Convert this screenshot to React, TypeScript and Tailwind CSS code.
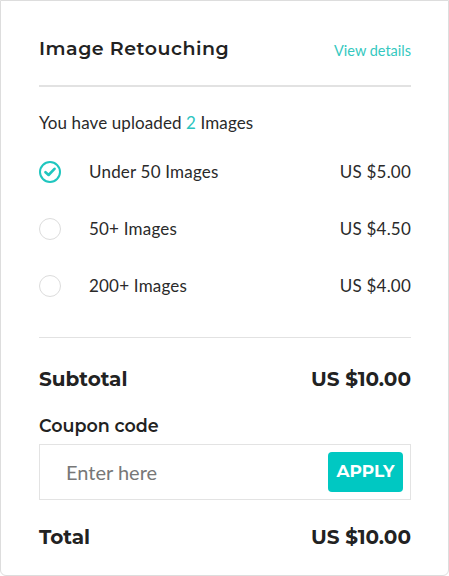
import React from 'react';

const tiers = [
  { label: 'Under 50 Images', price: 'US $5.00', checked: true },
  { label: '50+ Images', price: 'US $4.50', checked: false },
  { label: '200+ Images', price: 'US $4.00', checked: false },
];

function Radio({ checked }: { checked: boolean }) {
  if (!checked) {
    return <span className="w-[22px] h-[22px] rounded-full border border-[#dcdcdc] shrink-0" />;
  }
  return (
    <span className="w-[22px] h-[22px] rounded-full border-2 border-[#1fc6bf] shrink-0 flex items-center justify-center">
      <svg width="12" height="10" viewBox="0 0 12 10">
        <path d="M1.5 5.2 L4.6 8 L10.5 1.8" fill="none" stroke="#1fc6bf" strokeWidth="2.6" strokeLinecap="round" strokeLinejoin="round" />
      </svg>
    </span>
  );
}

export default function App() {
  const head = { fontFamily: 'Montserrat, Inter, "Liberation Sans", sans-serif' };
  const body = { fontFamily: 'Lato, "Noto Sans", sans-serif' };
  return (
    <div className="w-[449px] h-[576px] bg-white">
      <div className="h-[576px] border border-[#dddddd] rounded-b-[6px] pl-[38px] pr-[37px] pt-[35px] text-[#222222]" style={body}>
        <div className="flex items-center justify-between h-[26px]">
          <h2 className="text-[19px] font-semibold tracking-[0.5px]" style={head}>Image Retouching</h2>
          <a className="text-[14.5px] text-[#35c8c0] mt-[4px]">View details</a>
        </div>
        <div className="h-[2px] bg-[#e2e2e2] mt-[23px]" />
        <p className="text-[17px] tracking-[0.1px] mt-[23px] text-[#2a2a2a]">
          You have uploaded <span className="text-[#2cc5bf]">2</span> Images
        </p>
        <div className="mt-[8px]">
          {tiers.map((t) => (
            <div key={t.label} className="flex items-center h-[57px] text-[17px] tracking-[0.2px] text-[#2a2a2a]">
              <Radio checked={t.checked} />
              <span className="ml-[28px] flex-1">{t.label}</span>
              <span>{t.price}</span>
            </div>
          ))}
        </div>
        <div className="h-px bg-[#e2e2e2] mt-[22px]" />
        <div className="flex items-center justify-between mt-[26px] text-[20px] font-bold" style={head}>
          <span>Subtotal</span>
          <span>US $10.00</span>
        </div>
        <div className="mt-[19px] text-[17.5px] font-semibold" style={head}>Coupon code</div>
        <div className="mt-[5px] h-[56px] border border-[#e3e3e3] flex items-center pl-[26px] pr-[7px]">
          <input
            className="flex-1 min-w-0 outline-none text-[20px] placeholder:text-[#777777]"
            placeholder="Enter here"
            style={body} />
          <button className="h-[40px] w-[75px] rounded-[4px] bg-[#00c8c2] text-white text-[17px] font-bold" style={head}>
            APPLY
          </button>
        </div>
        <div className="flex items-center justify-between mt-[22px] text-[20px] font-bold" style={head}>
          <span>Total</span>
          <span>US $10.00</span>
        </div>
      </div>
    </div>
  );
}
